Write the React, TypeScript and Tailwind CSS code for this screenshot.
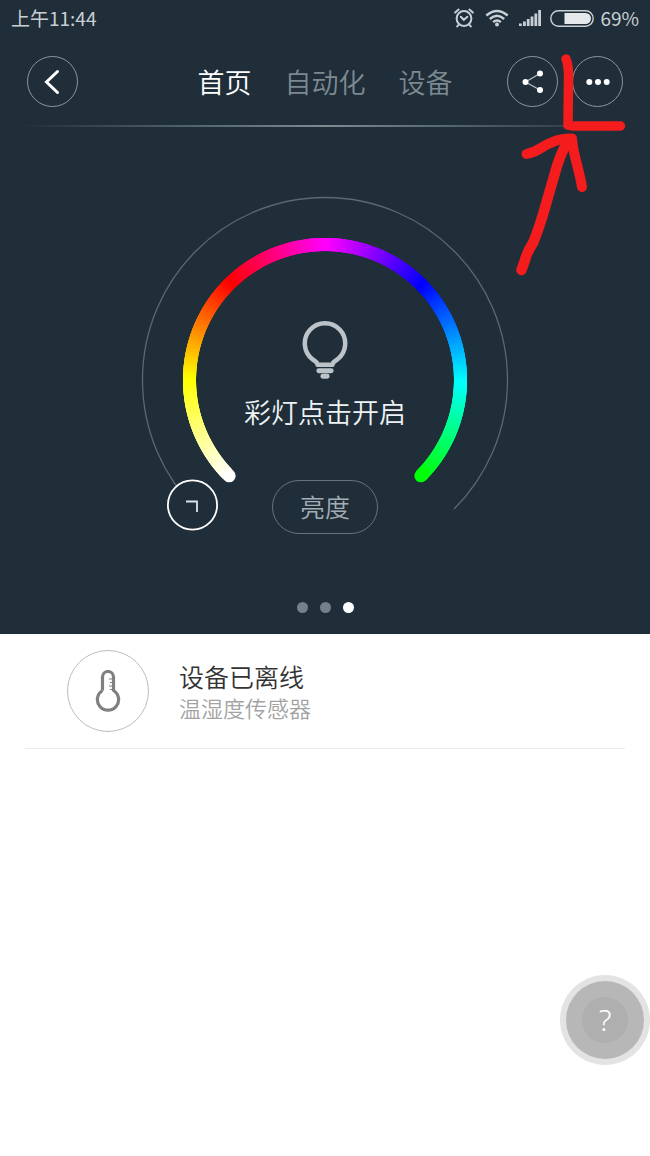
import { useState } from 'react'
import clsx from 'clsx'

const tabs = ['首页', '自动化', '设备']

// the dial runs clockwise from lower left to lower right, 45 degrees per stop
const stops = [
  [255, 255, 255],
  [255, 255, 0],
  [255, 0, 0],
  [255, 0, 255],
  [0, 0, 255],
  [0, 255, 255],
  [0, 255, 0],
]

const START = 135
const SWEEP = 270
const CENTER = 185

const point = (deg: number, r: number) => {
  const a = (deg * Math.PI) / 180
  return `${(CENTER + r * Math.cos(a)).toFixed(2)} ${(CENTER + r * Math.sin(a)).toFixed(2)}`
}

const colorAt = (step: number) => {
  const i = Math.min(Math.floor(step / 45), stops.length - 2)
  const t = (step - i * 45) / 45
  const [r, g, b] = stops[i].map((c, k) => Math.round(c + (stops[i + 1][k] - c) * t))
  return `rgb(${r}, ${g}, ${b})`
}

const segments = Array.from({ length: SWEEP }, (_, i) => i)

const StatusBar = () => (
  <div className="flex h-9 items-center justify-between px-[11px] text-[19px] leading-9 font-normal text-[#c9d0d5]">
    <span>上午11:44</span>
    <div className="flex items-center">
      <svg width="20" height="20" viewBox="0 0 20 20" fill="none" stroke="currentColor" strokeWidth="2" strokeLinecap="round" className="mr-[11px]">
        <circle cx="10" cy="10.5" r="7.4" />
        <path d="M6.8 8.8 9.8 11.8 13.4 8.8M1.2 4.6 4.6 1.6M18.8 4.6 15.4 1.6M4.6 16.8 3.2 18.4M15.4 16.8 16.8 18.4" />
      </svg>
      <svg width="24" height="18" viewBox="0 0 24 18" fill="none" stroke="currentColor" strokeWidth="2.4" className="mr-2.5">
        <path d="M1.3 6.5Q12-2.6 22.7 6.5M4.8 10Q12 3.6 19.2 10M8.1 13.2Q12 9.8 15.9 13.2" />
        <circle cx="12" cy="15.4" r="2" fill="currentColor" stroke="none" />
      </svg>
      <svg width="22" height="16" viewBox="0 0 22 16" fill="currentColor" className="mr-[9px]">
        <path d="M0 13.5h2.8V16H0zM4 11.5h2.8V16H4zM7.8 9h2.8v7H7.8zM11.6 6.5h2.8V16h-2.8zM15.4 3.5h2.8V16h-2.8zM19.2 0H22v16h-2.8z" />
      </svg>
      <svg width="44" height="17" viewBox="0 0 44 17" className="mr-1.5">
        <rect x="0.8" y="0.8" width="42.4" height="15.4" rx="7.7" fill="none" stroke="currentColor" strokeWidth="1.4" />
        <path d="M14.5 3H35.5a5.5 5.5 0 0 1 0 11H14.5z" fill="#e6e9ec" />
      </svg>
      <span>69%</span>
    </div>
  </div>
)

const RoundButton = ({ label, children }: any) => (
  <button aria-label={label} className="flex size-[51px] items-center justify-center rounded-full border border-[#8b979e] text-white">
    {children}
  </button>
)

const DialRing = () => (
  <svg viewBox="0 0 370 370" fill="none" className="col-start-1 row-start-1 size-[370px]">
    <path d={`M${point(START, 182.5)}A182.5 182.5 0 1 1 ${point(START + SWEEP, 182.5)}`} stroke="#5b6970" strokeWidth="1.3" />
    {segments.map(s => (
      <path
        key={s}
        d={`M${point(START + s, 135.5)}A135.5 135.5 0 0 1 ${point(START + Math.min(s + 3, SWEEP), 135.5)}`}
        stroke={colorAt(s)}
        strokeWidth="13"
        strokeLinecap={s === 0 || s === SWEEP - 1 ? 'round' : 'butt'}
      />
    ))}
    <circle cx="52.5" cy="310" r="24.6" fill="#1f2e39" stroke="#fff" strokeWidth="1.8" />
    <path d="M46 306.5H57V317" stroke="#dde3e6" strokeWidth="1.8" />
  </svg>
)

const BulbIcon = () => (
  <svg width="46" height="58" viewBox="0 0 46 58" fill="none" stroke="#bcc4c9" strokeWidth="4.5">
    <path d="M15.5 43.8H30.5C30.5 41.2 32.8 40 35.3 38.5A20.2 20.2 0 1 0 10.7 38.5C13.2 40 15.5 41.2 15.5 43.8Z" strokeLinejoin="round" />
    <path d="M16.8 49.8H29.2M20.8 55.2H25.2" strokeWidth="4.9" strokeLinecap="round" />
  </svg>
)

const Markup = () => (
  <svg
    width="160"
    height="300"
    viewBox="490 0 160 300"
    fill="none"
    stroke="#f41c1c"
    strokeLinecap="round"
    strokeLinejoin="round"
    className="pointer-events-none absolute top-0 right-0"
  >
    <path d="M566 59Q569 66 568.5 80L568 125 573 126H620.5" strokeWidth="9.5" />
    <path d="M526.5 154Q535 152 541 148T554 141.5Q560 138.5 572 138.5C573 155 579 168 582 187" strokeWidth="10" />
    <path d="M569 140Q562 150 557 166L546 204Q540 226 533 243 527 252 525 260L521.5 270" strokeWidth="10.5" />
  </svg>
)

export default function App() {
  const [tab, setTab] = useState('首页')
  const [page, setPage] = useState(2)

  return (
    <div className="relative min-h-screen bg-white font-['Noto_Sans_CJK_SC',sans-serif] font-[350]">
      <header className="bg-[#1f2e39]">
        <StatusBar />
        <div className="grid grid-cols-[1fr_auto_1fr] items-center px-[27px] pt-5 pb-[18px]">
          <RoundButton label="返回">
            <svg width="26" height="26" viewBox="0 0 26 26" fill="none" stroke="currentColor" strokeWidth="3" strokeLinecap="round">
              <path d="M17.5 2.5 6.5 13 17.5 23.5" />
            </svg>
          </RoundButton>
          <nav className="flex gap-[33px] text-[27px] leading-8">
            {tabs.map(t => (
              <button key={t} onClick={() => setTab(t)} className={clsx(t === tab ? 'text-white' : 'text-[#7d8990]')}>
                {t}
              </button>
            ))}
          </nav>
          <div className="flex justify-end gap-3.5">
            <RoundButton label="分享">
              <svg width="26" height="26" viewBox="0 0 26 26" fill="currentColor">
                <path d="M20 4.5 5.5 13 20 21" fill="none" stroke="#b9c1c6" strokeWidth="1.3" />
                <circle cx="5.5" cy="13" r="3" />
                <circle cx="20" cy="4.5" r="3" />
                <circle cx="20" cy="21" r="3" />
              </svg>
            </RoundButton>
            <RoundButton label="更多">
              <svg width="26" height="26" viewBox="0 0 26 26" fill="currentColor">
                <circle cx="4.3" cy="13" r="3" />
                <circle cx="13" cy="13" r="3" />
                <circle cx="21.7" cy="13" r="3" />
              </svg>
            </RoundButton>
          </div>
        </div>
        <div className="h-0.5 bg-linear-to-r from-transparent from-3% via-[#7c8c91] to-transparent to-97%" />

        <div className="flex flex-col items-center pt-[68px] pb-[21px]">
          <div className="grid justify-items-center">
            <DialRing />
            <div className="col-start-1 row-start-1 flex flex-col items-center pt-[126px]">
              <button className="flex flex-col items-center gap-[17px] text-[27px] leading-8 text-[#eef2f4]">
                <BulbIcon />
                彩灯点击开启
              </button>
              <button className="mt-[52px] h-[54px] w-[106px] rounded-full border border-[#66737b] text-[25px] text-[#a3adb3]">
                亮度
              </button>
            </div>
          </div>
          <div className="mt-[37px] flex gap-3">
            {[0, 1, 2].map(i => (
              <button
                key={i}
                aria-label={`第${i + 1}页`}
                onClick={() => setPage(i)}
                className={clsx('size-[11px] rounded-full', i === page ? 'bg-white' : 'bg-[#74818a]')}
              />
            ))}
          </div>
        </div>
      </header>

      <main className="px-[25px]">
        <div className="flex items-center gap-[30px] border-b border-[#ececec] py-4 pl-[42px]">
          <div className="flex size-[82px] items-center justify-center rounded-full border border-[#bdbdbd]">
            <svg width="26" height="42" viewBox="0 0 26 42" fill="none" stroke="#808080">
              <path d="M7.5 20.5V7A5.5 5.5 0 0 1 18.5 7V20.5A10.6 10.6 0 1 1 7.5 20.5" strokeWidth="3.2" strokeLinejoin="round" />
              <path d="M14 9H18M15 12.5H18M14 16H18M15 19.5H18" strokeWidth="1" />
            </svg>
          </div>
          <div>
            <p className="text-[25px] leading-8 text-[#333]">设备已离线</p>
            <p className="text-[22px] leading-[30px] text-[#a3a3a3]">温湿度传感器</p>
          </div>
        </div>
      </main>

      <button aria-label="帮助" className="fixed right-0 bottom-[91px] rounded-full bg-[#e3e3e3] p-1.5">
        <span className="flex size-[78px] items-center justify-center rounded-full bg-[#b7b7b7]">
          <span className="flex size-[46px] items-center justify-center rounded-full bg-[#afafaf] font-sans text-3xl font-light text-white">?</span>
        </span>
      </button>

      <Markup />
    </div>
  )
}
